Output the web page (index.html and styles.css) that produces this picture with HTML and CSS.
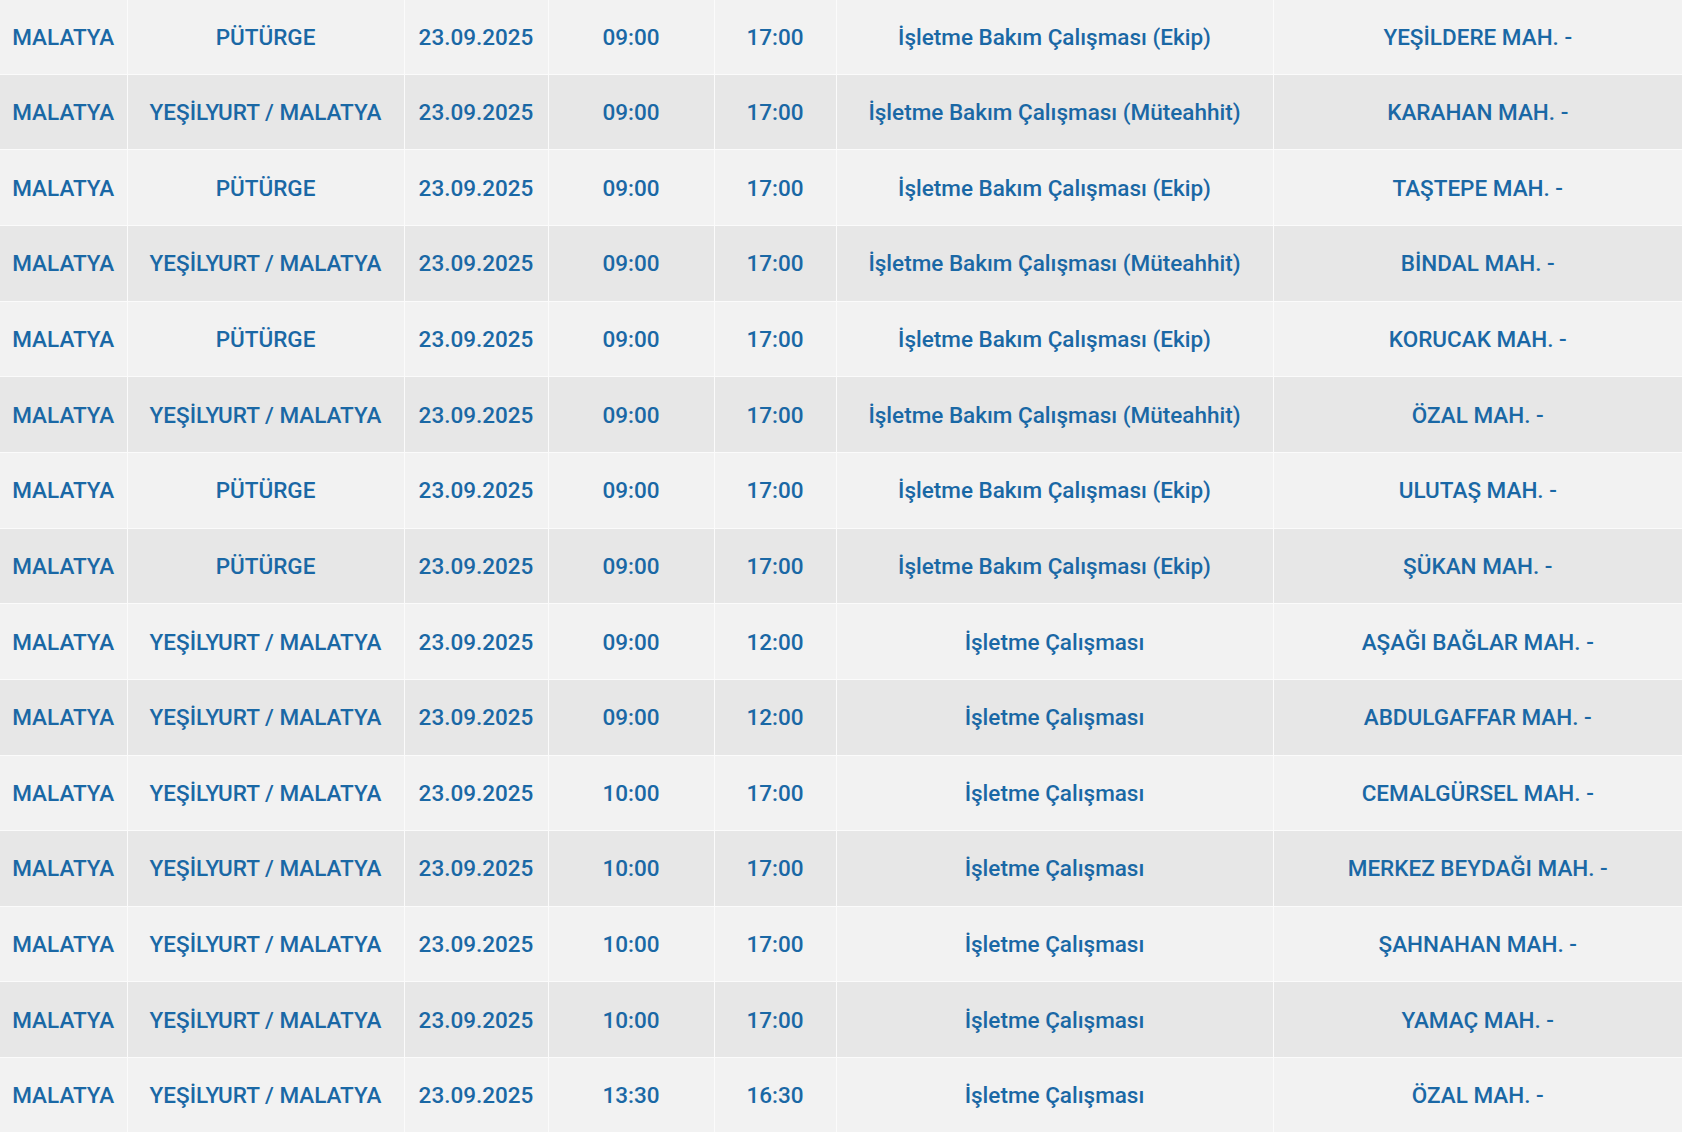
FILE: index.html
```html
<!DOCTYPE html>
<html lang="tr">
<head>
<meta charset="utf-8">
<title>Planlı Kesintiler</title>
<link rel="stylesheet" href="styles.css">
</head>
<body>
<table class="outages">
<colgroup>
<col class="c-il"><col class="c-ilce"><col class="c-tarih"><col class="c-bas"><col class="c-bit"><col class="c-neden"><col class="c-yer">
</colgroup>
<tbody>
<tr><td>MALATYA</td><td>PÜTÜRGE</td><td>23.09.2025</td><td>09:00</td><td>17:00</td><td>İşletme Bakım Çalışması (Ekip)</td><td>YEŞİLDERE MAH. -</td></tr>
<tr><td>MALATYA</td><td>YEŞİLYURT / MALATYA</td><td>23.09.2025</td><td>09:00</td><td>17:00</td><td>İşletme Bakım Çalışması (Müteahhit)</td><td>KARAHAN MAH. -</td></tr>
<tr><td>MALATYA</td><td>PÜTÜRGE</td><td>23.09.2025</td><td>09:00</td><td>17:00</td><td>İşletme Bakım Çalışması (Ekip)</td><td>TAŞTEPE MAH. -</td></tr>
<tr><td>MALATYA</td><td>YEŞİLYURT / MALATYA</td><td>23.09.2025</td><td>09:00</td><td>17:00</td><td>İşletme Bakım Çalışması (Müteahhit)</td><td>BİNDAL MAH. -</td></tr>
<tr><td>MALATYA</td><td>PÜTÜRGE</td><td>23.09.2025</td><td>09:00</td><td>17:00</td><td>İşletme Bakım Çalışması (Ekip)</td><td>KORUCAK MAH. -</td></tr>
<tr><td>MALATYA</td><td>YEŞİLYURT / MALATYA</td><td>23.09.2025</td><td>09:00</td><td>17:00</td><td>İşletme Bakım Çalışması (Müteahhit)</td><td>ÖZAL MAH. -</td></tr>
<tr><td>MALATYA</td><td>PÜTÜRGE</td><td>23.09.2025</td><td>09:00</td><td>17:00</td><td>İşletme Bakım Çalışması (Ekip)</td><td>ULUTAŞ MAH. -</td></tr>
<tr><td>MALATYA</td><td>PÜTÜRGE</td><td>23.09.2025</td><td>09:00</td><td>17:00</td><td>İşletme Bakım Çalışması (Ekip)</td><td>ŞÜKAN MAH. -</td></tr>
<tr><td>MALATYA</td><td>YEŞİLYURT / MALATYA</td><td>23.09.2025</td><td>09:00</td><td>12:00</td><td>İşletme Çalışması</td><td>AŞAĞI BAĞLAR MAH. -</td></tr>
<tr><td>MALATYA</td><td>YEŞİLYURT / MALATYA</td><td>23.09.2025</td><td>09:00</td><td>12:00</td><td>İşletme Çalışması</td><td>ABDULGAFFAR MAH. -</td></tr>
<tr><td>MALATYA</td><td>YEŞİLYURT / MALATYA</td><td>23.09.2025</td><td>10:00</td><td>17:00</td><td>İşletme Çalışması</td><td>CEMALGÜRSEL MAH. -</td></tr>
<tr><td>MALATYA</td><td>YEŞİLYURT / MALATYA</td><td>23.09.2025</td><td>10:00</td><td>17:00</td><td>İşletme Çalışması</td><td>MERKEZ BEYDAĞI MAH. -</td></tr>
<tr><td>MALATYA</td><td>YEŞİLYURT / MALATYA</td><td>23.09.2025</td><td>10:00</td><td>17:00</td><td>İşletme Çalışması</td><td>ŞAHNAHAN MAH. -</td></tr>
<tr><td>MALATYA</td><td>YEŞİLYURT / MALATYA</td><td>23.09.2025</td><td>10:00</td><td>17:00</td><td>İşletme Çalışması</td><td>YAMAÇ MAH. -</td></tr>
<tr><td>MALATYA</td><td>YEŞİLYURT / MALATYA</td><td>23.09.2025</td><td>13:30</td><td>16:30</td><td>İşletme Çalışması</td><td>ÖZAL MAH. -</td></tr>
</tbody>
</table>
</body>
</html>
```

FILE: styles.css
```css
html, body {
  margin: 0;
  padding: 0;
  background: #f2f2f2;
}

.outages {
  width: 1682px;
  height: 1132px;
  border-collapse: collapse;
  table-layout: fixed;
  font-family: Roboto, "Noto Sans", sans-serif;
  font-weight: 500;
  font-size: 22.5px;
  color: #1a68a5;
}

.c-il { width: 127px; }
.c-ilce { width: 277px; }
.c-tarih { width: 144px; }
.c-bas { width: 166px; }
.c-bit { width: 122px; }
.c-neden { width: 437px; }
.c-yer { width: 409px; }

.outages tr {
  background: #f2f2f2;
}

.outages tr:nth-child(even) {
  background: #e7e7e7;
}

.outages td {
  border: 1px solid #fbfbfb;
  text-align: center;
  vertical-align: middle;
  padding: 0 4px;
  white-space: nowrap;
  overflow: hidden;
}

.outages tr:first-child td { border-top: 0; }
.outages tr:last-child td { border-bottom: 0; }
.outages td:first-child { border-left: 0; }
.outages td:last-child { border-right: 0; }
```
